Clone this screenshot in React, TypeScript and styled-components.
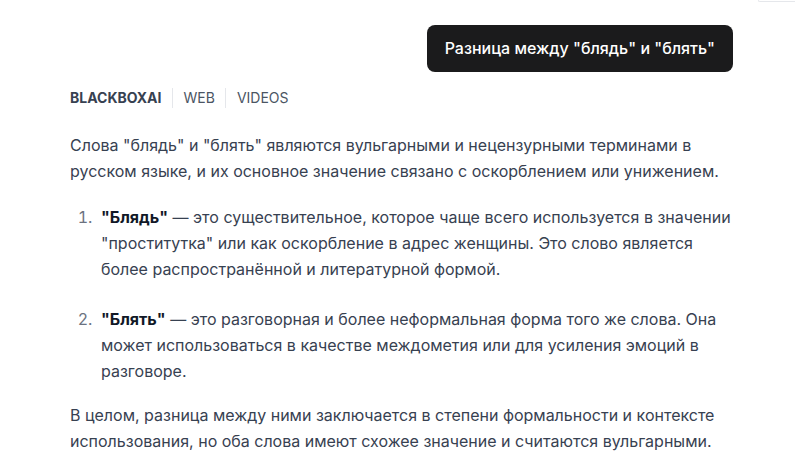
import styled, { createGlobalStyle } from "styled-components";

const GlobalStyle = createGlobalStyle`
    html, body {
        margin: 0;
        padding: 0;
        background: #ffffff;
    }
    body {
        font-family: Inter, "Noto Sans", sans-serif;
        -webkit-font-smoothing: antialiased;
    }
`;

const Page = styled.div`
    width: 795px;
    height: 462px;
    overflow: hidden;
    display: flex;
    flex-direction: column;
`;

const TopEdge = styled.div`
    display: flex;
    justify-content: flex-end;
    height: 2px;
`;

const CornerPiece = styled.div`
    width: 36px;
    height: 1px;
    border-bottom: 1px solid #e5e7eb;
    border-left: 1px solid #e5e7eb;
    border-bottom-left-radius: 6px;
`;

const Chat = styled.div`
    display: flex;
    flex-direction: column;
    padding: 23px 62px 0 70px;
`;

const UserRow = styled.div`
    display: flex;
    justify-content: flex-end;
`;

const Bubble = styled.div`
    background: #1b1b1c;
    color: #ffffff;
    border-radius: 8px;
    padding: 13px 18px 14px;
    font-size: 16px;
    font-weight: 500;
    line-height: 20px;
`;

const SourceTabs = styled.div`
    display: flex;
    align-items: center;
    margin-top: 15px;
    height: 22px;
`;

const Tab = styled.span<{ $active?: boolean }>`
    font-size: 14px;
    font-weight: ${(p) => (p.$active ? 700 : 400)};
    color: ${(p) => (p.$active ? "#374151" : "#4b5563")};
    padding: 0 10px 0 11px;
    line-height: 20px;
    border-left: 1px solid #e5e7eb;

    &:first-child {
        padding-left: 0;
        border-left: none;
    }
`;

const Answer = styled.div`
    margin-top: 23px;
    color: #374151;
    font-size: 16px;
    line-height: 26px;
`;

const Para = styled.p`
    margin: 0;
`;

const List = styled.ol`
    margin: 20px 0 18px;
    padding-left: 31px;

    li {
        padding-left: 0;
        margin-bottom: 24px;
    }

    li:last-child {
        margin-bottom: 0;
    }

    li::marker {
        content: counter(list-item) ".  ";
        color: #6b7280;
    }
`;

const Term = styled.strong`
    color: #111827;
    font-weight: 700;
`;

export default function App() {
    return (
        <Page>
            <GlobalStyle />
            <TopEdge>
                <CornerPiece />
            </TopEdge>
            <Chat>
                <UserRow>
                    <Bubble>Разница между "блядь" и "блять"</Bubble>
                </UserRow>
                <SourceTabs>
                    <Tab $active>BLACKBOXAI</Tab>
                    <Tab>WEB</Tab>
                    <Tab>VIDEOS</Tab>
                </SourceTabs>
                <Answer>
                    <Para>
                        Слова "блядь" и "блять" являются вульгарными и нецензурными терминами в русском
                        языке, и их основное значение связано с оскорблением или унижением.
                    </Para>
                    <List>
                        <li>
                            <Term>"Блядь"</Term> — это существительное, которое чаще всего используется в
                            значении "проститутка" или как оскорбление в адрес женщины. Это слово является
                            более распространённой и литературной формой.
                        </li>
                        <li>
                            <Term>"Блять"</Term> — это разговорная и более неформальная форма того же слова.
                            Она может использоваться в качестве междометия или для усиления эмоций в
                            разговоре.
                        </li>
                    </List>
                    <Para>
                        В целом, разница между ними заключается в степени формальности и контексте
                        использования, но оба слова имеют схожее значение и считаются вульгарными.
                    </Para>
                </Answer>
            </Chat>
        </Page>
    );
}
